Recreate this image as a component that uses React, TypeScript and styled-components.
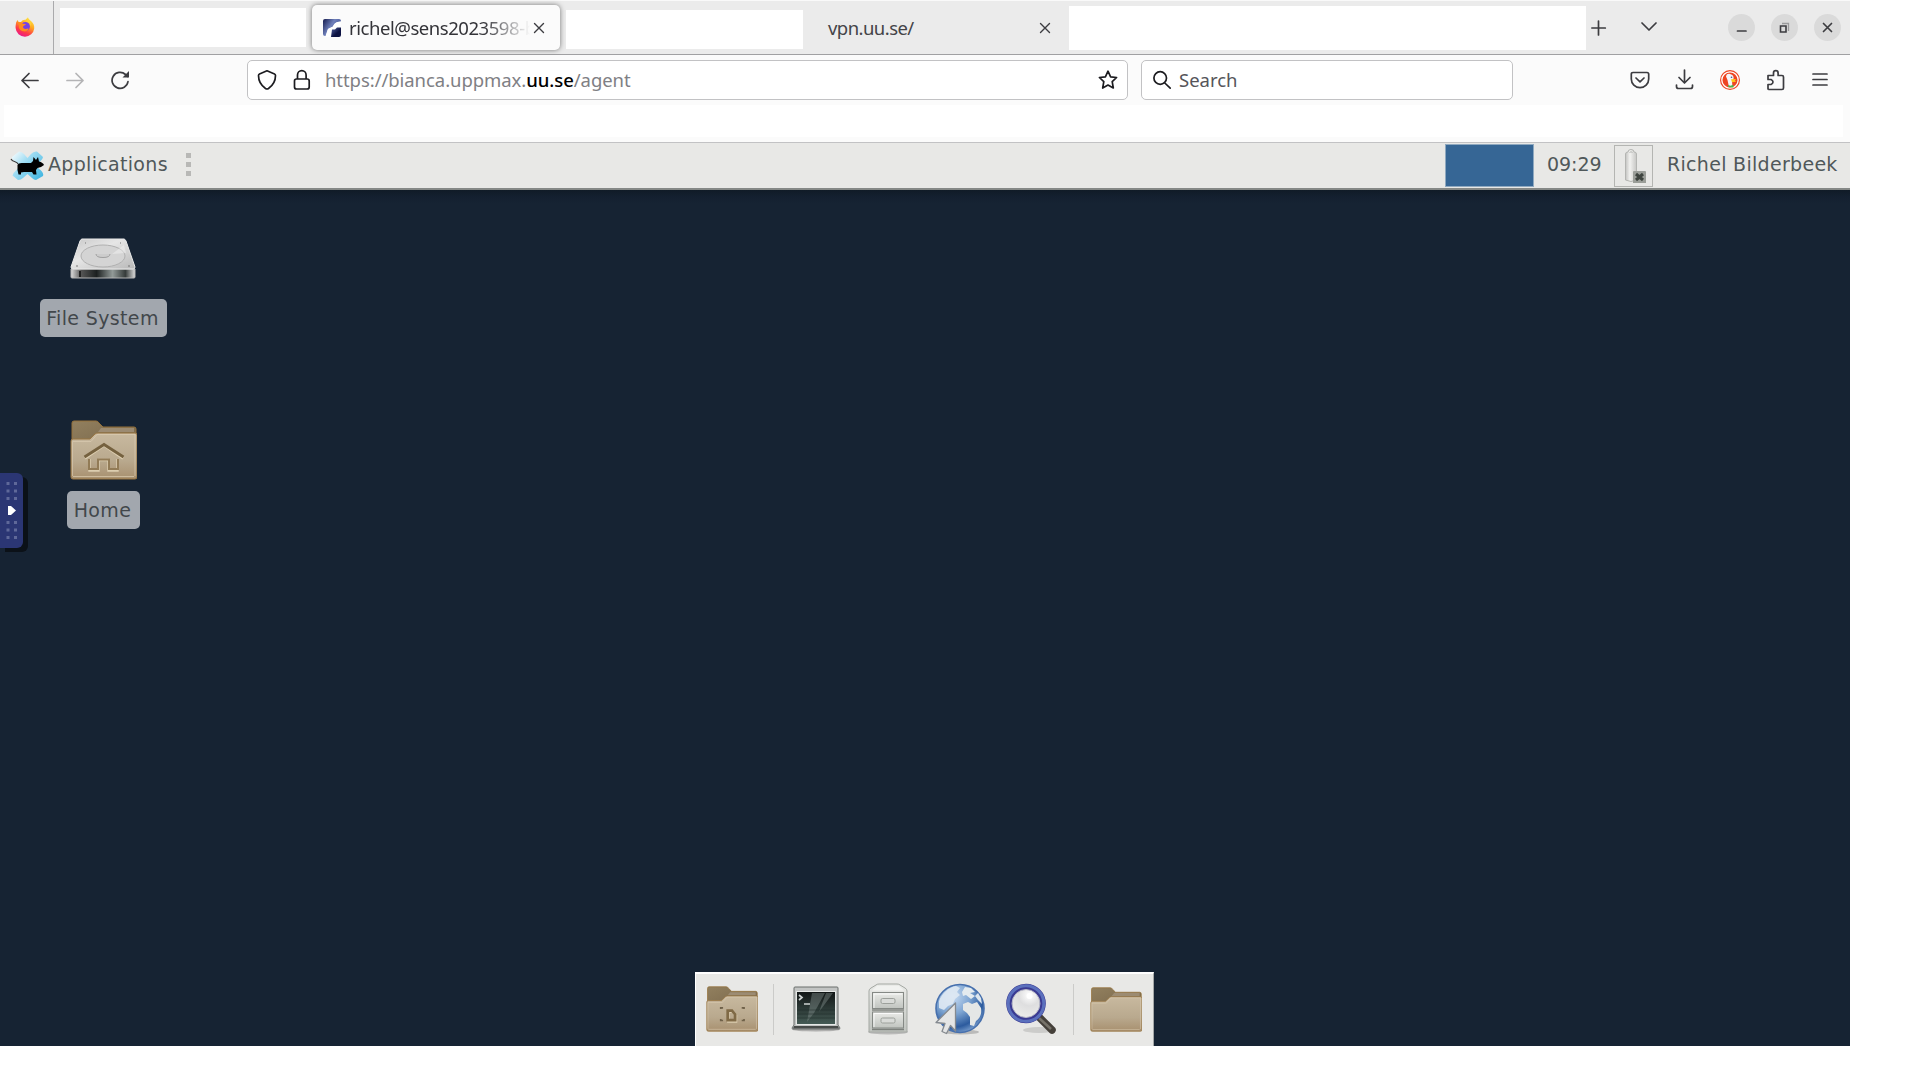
import React from "react";
import styled, { createGlobalStyle } from "styled-components";

const GlobalStyle = createGlobalStyle`
  * { box-sizing: border-box; }
  body { margin: 0; background: #fff; }
`;

const ui = `"Noto Sans", "Open Sans", sans-serif`;
const desk = `"DejaVu Sans", sans-serif`;

const Window = styled.div`
  width: 1850px;
  height: 1046px;
  display: flex;
  flex-direction: column;
  overflow: hidden;
`;
const TabBar = styled.div`
  height: 55px;
  flex: none;
  display: flex;
  align-items: flex-start;
  background: #ebebeb;
  border-top: 1px solid #f9f9f9;
  border-bottom: 1px solid #a0a0a2;
`;
const PinnedTab = styled.div`
  width: 54px;
  height: 53px;
  padding: 16px 0 0 15px;
  border-right: 1px solid #aaaaac;
`;
const Blank = styled.div<{ w: number; h: number; top: number; left: number }>`
  width: ${(p) => p.w}px;
  height: ${(p) => p.h}px;
  margin: ${(p) => p.top}px 0 0 ${(p) => p.left}px;
  background: #fff;
  flex: none;
`;
const ActiveTab = styled.div`
  width: 248px;
  height: 45px;
  margin: 4px 0 0 6px;
  padding: 0 14px 0 11px;
  flex: none;
  display: flex;
  align-items: center;
  border-radius: 5px;
  background: #fbfbfb;
  box-shadow: 0 0 5px rgba(0, 0, 0, 0.5);
`;
const TabTitle = styled.span`
  margin-left: 8px;
  width: 185px;
  margin-right: -1px;
  flex: none;
  white-space: nowrap;
  font: 18.5px/28px ${ui};
  letter-spacing: -0.45px;
  color: #333338;
  -webkit-mask-image: linear-gradient(90deg, #000 72%, transparent 98%);
  mask-image: linear-gradient(90deg, #000 72%, transparent 98%);
`;
const PlainTab = styled.div`
  width: 266px;
  height: 53px;
  flex: none;
  display: flex;
  align-items: center;
  justify-content: space-between;
  padding: 0 18px 0 25px;
  font: 18.5px/28px ${ui};
  letter-spacing: -0.55px;
  color: #444448;
`;
const TabActions = styled.div`
  height: 53px;
  flex: 1;
  display: flex;
  align-items: center;
  padding: 0 9px 0 5px;
`;
const Gap = styled.div<{ w?: number }>`
  ${(p) => (p.w ? `width: ${p.w}px; flex: none;` : `flex: 1;`)}
`;
const WindowButton = styled.div`
  width: 27px;
  height: 27px;
  border-radius: 50%;
  background: #dadada;
  margin-left: 16px;
  display: flex;
  flex: none;
`;
const NavBar = styled.div`
  height: 50px;
  flex: none;
  display: flex;
  align-items: center;
  padding: 0 20px;
  background: #fbfbfb;
`;
const Field = styled.div<{ w: number }>`
  width: ${(p) => p.w}px;
  height: 40px;
  flex: none;
  display: flex;
  align-items: center;
  padding: 0 9px;
  background: #fff;
  border: 1px solid #c2c2c4;
  border-radius: 5px;
  font: 18.5px/28px ${ui};
  color: #55555a;
`;
const Url = styled.span`
  margin-left: 14px;
  flex: 1;
  color: #808084;
  letter-spacing: -0.06px;
  b { font-weight: 500; color: #000; }
`;
const Bookmarks = styled.div`
  height: 37px;
  flex: none;
  padding: 0 7px 0 4px;
  background: #fbfbfb;
`;
const BookmarkArea = styled.div`
  height: 32px;
  background: #fff;
`;
const Panel = styled.div`
  height: 48px;
  flex: none;
  display: flex;
  align-items: center;
  padding-left: 10px;
  background: #e8e8e6;
  border-top: 1px solid #c2c2c4;
  border-bottom: 2px solid #858886;
  font: 19px/24px ${desk};
  color: #50585a;
`;
const PanelText = styled.span<{ w: number; left: number; sp: number }>`
  width: ${(p) => p.w}px;
  margin-left: ${(p) => p.left}px;
  padding-bottom: 3px;
  letter-spacing: ${(p) => p.sp}px;
  white-space: nowrap;
`;
const Handle = styled.div`
  display: grid;
  gap: 4px;
  margin: 0 0 2px 18px;
  i { width: 5px; height: 5px; background: #b8b8b6; }
`;
const Pager = styled.div`
  width: 89px;
  height: 43px;
  background: #366695;
  border: 1px solid #8fa9c0;
`;
const Tray = styled.div`
  width: 39px;
  height: 42px;
  margin-left: 13px;
  border: 1px solid #b4b5b2;
  flex: none;
`;
const Desktop = styled.div`
  flex: 1;
  position: relative;
  background: linear-gradient(#101b27, #142030 7px, #162333 14px);
`;
const DesktopItem = styled.div<{ x: number; y: number }>`
  position: absolute;
  left: ${(p) => p.x}px;
  top: ${(p) => p.y}px;
  display: flex;
  flex-direction: column;
  align-items: center;
`;
const ItemLabel = styled.div<{ w: number; top: number }>`
  width: ${(p) => p.w}px;
  height: 38px;
  margin-top: ${(p) => p.top}px;
  padding-right: 2px;
  border-radius: 5px;
  background: #a2a7ae;
  text-align: center;
  font: 19px/38px ${desk};
  letter-spacing: 0.35px;
  color: #42474b;
  white-space: nowrap;
`;
const SideHandle = styled.div`
  position: absolute;
  left: 0;
  top: 283px;
  width: 23px;
  height: 75px;
  border-radius: 0 6px 6px 0;
  background: #2b3674;
  box-shadow: 5px 4px 0 #0b1118;
`;
const Dock = styled.div`
  position: absolute;
  left: 695px;
  bottom: 0;
  width: 459px;
  height: 74px;
  display: flex;
  align-items: center;
  background: #e8e8e6;
  border: solid #fff;
  border-width: 2px 1px 0 1px;
  border-right-color: #a5a8a8;
  padding: 0 11px 2px 10px;
  svg { flex: none; }
`;
const Divider = styled.div`
  width: 1px;
  height: 51px;
  background: #cbcbc9;
`;

const Line = ({ w, h, d, color = "#3c3c40", sw = 1.7 }: { w: number; h: number; d: string; color?: string; sw?: number }) => (
  <svg width={w} height={h} viewBox={`0 0 ${w} ${h}`} fill="none" stroke={color} strokeWidth={sw} strokeLinecap="round" strokeLinejoin="round" style={{ flex: "none" }}>
    <path d={d} />
  </svg>
);

const Firefox = () => (
  <svg width="20" height="20" viewBox="0 0 20 20">
    <defs>
      <linearGradient id="fx" x1=".8" y1="0" x2=".3" y2="1">
        <stop offset="0" stopColor="#fff04a" /><stop offset=".4" stopColor="#ffa51f" /><stop offset=".72" stopColor="#ff3c47" /><stop offset="1" stopColor="#e8158f" />
      </linearGradient>
    </defs>
    <path d="M1.2 5.2 2.6 3l1 2 2.4.2C7 3 9 2.500 10.500 2.700L13 .3c.3 2 2 2.700 3.500 4.200 2 1.800 3 4 2.700 7A9.200 9.200 0 0 1 10 19.700 9.300 9.300 0 0 1 .6 11C.5 8.500.9 7 1.200 5.200Z" fill="url(#fx)" />
    <circle cx="10.300" cy="9.500" r="4.600" fill="#7542e5" />
    <path d="M2.600 5.500c2.500-.8 4.500 0 5.300 1.200l3 .3c-.3 1.200-2 1.500-2.600 2.300-.8 1 .2 2.500 1.800 2.700 1.600.2 2.300-.8 3.500-.3-.7 2-3 3-5.400 2.600-3-.5-4.700-3-4.200-5.800Z" fill="#ff8a1e" />
    <path d="M11 4.500c2.500.2 4.500 2 4.500 5 1-2.500.3-5.500-2-7.200Z" fill="#ffd23a" />
  </svg>
);
const ThinLinc = () => (
  <svg width="18" height="18" viewBox="0 0 18 18" style={{ flex: "none" }}>
    <defs>
      <linearGradient id="tl" x1="0" y1="0" x2="1" y2=".6"><stop offset="0" stopColor="#141a4c" /><stop offset=".5" stopColor="#6f80bb" /><stop offset="1" stopColor="#3a4a8c" /></linearGradient>
      <linearGradient id="tl2" x1="0" y1="0" x2="1" y2="1"><stop offset="0" stopColor="#5363a2" /><stop offset=".6" stopColor="#0c1242" /></linearGradient>
    </defs>
    <path d="M2 0h14q2 0 2 2v.5L14.500 3Q11 4 10 7.500L5 10 2.500 17H2q-2 0-2-2V2Q0 0 2 0Z" fill="url(#tl)" />
    <path d="M18 2.500 14.500 3Q11 4 10 7.500L5 10 2.500 18H7l2-6 3-2 5-2 1-2Z" fill="#fff" />
    <path d="M9 10.500h3l2-2h4V16q0 2-2 2H8Z" fill="url(#tl2)" />
  </svg>
);
const Duck = () => (
  <svg width="20" height="20" viewBox="0 0 20 20">
    <circle cx="10" cy="10" r="10" fill="#ee4522" />
    <circle cx="10" cy="10" r="8.200" fill="none" stroke="#fff" strokeWidth="1.300" />
    <path d="M6 6.500C6.500 4 8 3.600 10 4c3 .5 4 2.500 3.500 5l-1.500 2.500L12.500 17H9L7.500 10Z" fill="#f5f5fa" />
    <path d="M11 9.300 16 9l-1 1.500 1 1.200-4 .5Z" fill="#ffc61c" />
    <path d="m8 15 2.500.8 2.800-1 .2 2.700-5-.3Z" fill="#48b748" />
    <circle cx="11.500" cy="7.300" r=".8" fill="#3a5b88" />
  </svg>
);
const Mouse = () => (
  <svg width="34" height="30" viewBox="0 0 34 30">
    <defs><linearGradient id="xm" x1="0" y1="0" x2="1" y2=".8"><stop offset="0" stopColor="#fff" /><stop offset=".4" stopColor="#a4def3" /><stop offset="1" stopColor="#46b8e2" /></linearGradient></defs>
    <path d="M2 6 9 .5q3 0 5 2.500l3.500 4L21 3q2.500-3 6-2.500l6 5.500q0 2-3 4.500L26 15l5 4.500q3 3 2 5.500l-7 4q-2 0-4-2l-4.500-4-4.500 4q-2 2-5 2l-5.500-4.500q0-2 3-4.500L10 15l-5-4.500Q1.500 8 2 6Z" fill="url(#xm)" />
    <path d="M1 8q1 2 3.500 2.500T9 14" fill="none" stroke="#333" strokeWidth="1.200" />
    <path d="M7.500 14q1-2 4-2h9.500l2-2 .5-4 2.500 3 2-3 1 4.500q4 1 5 3.500l-3 2-3.500 1-1.500 2 .5 4.500h-3L22 21h-8l-3 .5v2H8.500L7.500 19Z" fill="#000" />
  </svg>
);
const Battery = () => (
  <svg width="37" height="40" viewBox="0 0 37 40">
    <defs><linearGradient id="bt"><stop offset="0" stopColor="#c2c2c0" /><stop offset=".4" stopColor="#f2f2f0" /><stop offset="1" stopColor="#c6c6c4" /></linearGradient></defs>
    <path d="M10.500 34V8q0-2 2.500-2 0-2.500 3-2.500T19 6q2.500 0 2.500 2v26q-5.500 3-11 0Z" fill="url(#bt)" stroke="#b4b5b2" />
    <path d="M14.500 6.500q1.500-1.500 3 0" fill="none" stroke="#b4b5b2" />
    <path d="M18 37V26q0-1 1-1h11q1 0 1 1v11Z" fill="#9b9e99" />
    <path d="m21 28 7 6m0-6-7 6" stroke="#3e443f" strokeWidth="3" />
  </svg>
);
const Drive = () => (
  <svg width="66" height="42" viewBox="0 0 66 42" style={{ marginRight: 2 }}>
    <defs>
      <linearGradient id="dt" x2="1" y2="1"><stop stopColor="#c8c8c8" /><stop offset=".4" stopColor="#e6e6e6" /><stop offset="1" stopColor="#b8b8b8" /></linearGradient>
      <linearGradient id="df"><stop stopColor="#ddd" /><stop offset=".16" stopColor="#555" /><stop offset=".4" stopColor="#1c2020" /><stop offset=".65" stopColor="#929a98" /><stop offset=".85" stopColor="#353b3a" /><stop offset="1" stopColor="#ddd" /></linearGradient>
    </defs>
    <path d="M1 31h64v8q0 1-1 1H2q-1 0-1-1Z" fill="url(#df)" stroke="#b4b4b4" />
    <path d="M12 1h42q1 0 2 2l9 26q0 2-2 2H3q-2 0-2-2l9-26q1-2 2-2Z" fill="url(#dt)" stroke="#eaeaea" />
    <ellipse cx="33" cy="18" rx="22" ry="11" fill="#d4d4d4" stroke="#b0b0b0" />
    <path d="M26 16q0 3.500 7 3.500t7-3.500" fill="#ccc" stroke="#9f9f9f" />
    <path d="m42 16 12-9 2 8Z" fill="#fff" opacity=".35" />
    <path d="M6 28h2m50 0h2M15 5h1m34 0h1" stroke="#777" />
    <path d="M10 33v6" stroke="#222" strokeWidth="2" />
  </svg>
);
const Folder = ({ w, h, kind }: { w: number; h: number; kind?: "home" | "desktop" }) => (
  <svg width={w} height={h} viewBox="0 0 67 60" preserveAspectRatio="none">
    <defs>
      <linearGradient id="ff" x2="0" y2="1"><stop stopColor="#c8b99f" /><stop offset=".6" stopColor="#b9a98e" /><stop offset="1" stopColor="#a8906f" /></linearGradient>
      <linearGradient id="fb" x2="1" y2="1"><stop stopColor="#92805f" /><stop offset="1" stopColor="#756347" /></linearGradient>
    </defs>
    <path d="M2 30V3q0-2 2-2h22q2 0 3 2l4 4h31q2 0 2 2v21Z" fill="url(#fb)" stroke="#94713a" />
    <path d="M31 8h33v4H28Z" fill="#a3927a" opacity=".8" />
    <path d="M1 21q0-2 2-2h17l5-5q1-1 3-1h37q2 0 2 2v42q0 2-2 2H3q-2 0-2-2Z" fill="url(#ff)" stroke="#997643" />
    <path d="M2.500 56V21.500H21l6-7h38V56" fill="none" stroke="#decfb5" opacity=".6" />
    <path d="M3 56.500h61" stroke="#ddceb1" opacity=".7" />
    {kind === "home" && (
      <g fill="none">
        <path d="m15 38.500 19-13 19 13M19.500 39v11.500h9V40h10v10.500h9V39" stroke="#dccdaf" strokeWidth="2.400" />
        <path d="m14.500 37 19.500-12.500 19.500 12.500" stroke="#75613f" strokeWidth="2.800" />
        <path d="M19 39v10h9V39.500h11V49h9V39" stroke="#927b56" strokeWidth="2" />
      </g>
    )}
    {kind === "desktop" && (
      <g fill="none" stroke="#806a46" strokeWidth="3.600">
        <path d="M28 32h5.500l4 5v7.500H28Z" stroke="#dccdaf" transform="translate(1 1.500)" />
        <path d="M28 32h5.500l4 5v7.500H28Z" />
        <path d="M19 30v-1.500h3m24 0h3V30M19 43v2h3m24 0h3v-2" stroke="#6f6149" strokeWidth="2.200" />
      </g>
    )}
  </svg>
);
const Terminal = () => (
  <svg width="50" height="46" viewBox="0 0 50 46">
    <defs><linearGradient id="tm" x2="0" y2="1"><stop stopColor="#111515" /><stop offset="1" stopColor="#455b55" /></linearGradient></defs>
    <ellipse cx="25" cy="43.500" rx="24" ry="2" fill="#777" opacity=".5" />
    <path d="M3 2q0-1 1-1h42q1 0 1 1v37l2 3q0 1-1 1H2q-1 0-1-1l2-3Z" fill="#c2c4c3" stroke="#6a6f6d" />
    <path d="M3 40h44l1 2.500H2Z" fill="#474b49" />
    <rect x="5.500" y="5.500" width="39" height="33" fill="url(#tm)" stroke="#e5e8e6" />
    <path d="M21 7h13L23 27 16 36Z" fill="#8c9895" opacity=".4" /><path d="M35 7h7L28 26Z" fill="#8c9895" opacity=".4" />
    <path d="M6 24h38M6 28h38M6 32h38" stroke="#1c2927" opacity=".5" />
    <path d="m8 9 3 2.500L8 14m5 4h6" fill="none" stroke="#ced3d2" strokeWidth="1.700" />
  </svg>
);
const Cabinet = () => (
  <svg width="42" height="52" viewBox="0 0 42 52">
    <defs><linearGradient id="cb" x2="0" y2="1"><stop stopColor="#eaebe8" /><stop offset="1" stopColor="#c0c4bf" /></linearGradient></defs>
    <ellipse cx="21" cy="49" rx="20" ry="2.500" fill="#777" opacity=".4" />
    <path d="M2 8q0-2 2-3l5-3q1-1 3-1h18q2 0 3 1l5 3q2 1 2 3v41H2Z" fill="url(#cb)" stroke="#a4a8a3" />
    <path d="M5 7.500 10 3h22l5 4.500Z" fill="#f1f2f0" />
    <g fill="url(#cb)" stroke="#858985"><rect x="5.500" y="9.500" width="31" height="16" /><rect x="5.500" y="29" width="31" height="16" /></g>
    <path d="M5 27h32M5 46.500h32" stroke="#60645f" strokeWidth="1.500" opacity=".7" />
    <g fill="#d9dbd8" stroke="#9ca09b"><rect x="14" y="15.500" width="14" height="5" rx="1.500" /><rect x="14" y="35" width="14" height="5" rx="1.500" /></g>
    <g stroke="#fff" fill="none" opacity=".8"><path d="M7 25V11h28M7 44V30.500h28" /></g>
  </svg>
);
const Globe = () => (
  <svg width="52" height="52" viewBox="0 0 52 52">
    <defs><radialGradient id="gl" cx=".35" cy=".25" r=".8"><stop stopColor="#c8dcf2" /><stop offset=".45" stopColor="#7ea5d2" /><stop offset=".8" stopColor="#2c5b9e" /><stop offset="1" stopColor="#7ca1d0" /></radialGradient></defs>
    <ellipse cx="27" cy="49" rx="18" ry="2.500" fill="#777" opacity=".4" />
    <circle cx="26" cy="25.500" r="24" fill="url(#gl)" stroke="#4770ad" strokeWidth="1.600" />
    <path d="M5 18C8 10 15 4 22 3l4 2-3 4 3 3-5 4-2 5-5 2-4 4-5-2Z" fill="#dfe9f3" opacity=".9" />
    <path d="m31 4 6 1 4 4-5 1 5 3-4 3-5-4-3 1-1-4Z" fill="#e4ebef" />
    <path d="m29 21 5-2 4 2 5-2 4 6c1 6-1 10-5 13l-2 5-4-1v-8l-3-4-4-3Z" fill="#e4e7e6" />
    <path d="m44 10 3 5 1 6-4-4-3-4Z" fill="#dce6ee" />
    <path d="M21.500 20v28l-5-5.500-4 8-4.500-2 3-8-9-1Z" fill="#e4e5e5" stroke="#858a90" strokeWidth="1.300" strokeLinejoin="round" />
  </svg>
);
const Magnifier = () => (
  <svg width="53" height="52" viewBox="0 0 53 52">
    <defs><radialGradient id="mg" cx=".6" cy=".25" r=".8"><stop stopColor="#fff" /><stop offset=".4" stopColor="#dededf" /><stop offset="1" stopColor="#f0f0ee" /></radialGradient></defs>
    <ellipse cx="34" cy="47" rx="16" ry="3" fill="#777" opacity=".25" />
    <path d="m34 34 13 13" stroke="#45403a" strokeWidth="7.500" strokeLinecap="round" />
    <path d="m34 35 12 11" stroke="#77736a" strokeWidth="2.500" />
    <circle cx="21" cy="20.500" r="16.800" fill="url(#mg)" stroke="#3a3a92" strokeWidth="6" />
    <circle cx="21" cy="20.500" r="17.800" fill="none" stroke="#5b70bd" strokeWidth="3" />
    <circle cx="21" cy="20.500" r="14" fill="none" stroke="#b9bac8" strokeWidth="1" />
    <circle cx="24.500" cy="13" r="3" fill="#fff" />
  </svg>
);

const dotRows = [10, 17.500, 25, 49, 56.500, 64];

export default function App() {
  return (
    <>
      <GlobalStyle />
      <Window>
        <TabBar>
          <PinnedTab><Firefox /></PinnedTab>
          <Blank w={246} h={39} top={7} left={6} />
          <ActiveTab>
            <ThinLinc />
            <TabTitle>richel@sens2023598-b</TabTitle>
            <Line w={12} h={12} d="m1.500 1.500 9 9m0-9-9 9" sw={1.400} />
          </ActiveTab>
          <Blank w={237} h={39} top={9} left={6} />
          <PlainTab>
            vpn.uu.se/
            <Line w={12} h={12} d="m1.500 1.500 9 9m0-9-9 9" sw={1.400} />
          </PlainTab>
          <Blank w={517} h={44} top={5} left={0} />
          <TabActions>
            <Line w={16} h={16} d="M7.500 1v14M.800 8h13.500" />
            <Gap w={33} />
            <Line w={18} h={12} d="m2 1 7 7 7-7" />
            <Gap />
            <WindowButton><Line w={27} h={27} d="M9.500 17h8.500" /></WindowButton>
            <WindowButton>
              <svg width="27" height="27" fill="none" strokeWidth="1.600">
                <path d="M11 9.500h6.500V17" stroke="#9b9b9d" strokeWidth="1.300" />
                <path d="M9.500 12H15v6H9.500Z" stroke="#3c3c40" />
              </svg>
            </WindowButton>
            <WindowButton><Line w={27} h={27} d="m9.500 9.500 8 8m0-8-8 8" /></WindowButton>
          </TabActions>
        </TabBar>
        <NavBar>
          <Line w={20} h={20} d="M18 10.500H2m7-7-7 7 7 7" />
          <Gap w={25} />
          <Line w={20} h={20} d="M2 10.500h16m-7-7 7 7-7 7" color="#b4b4b6" />
          <Gap w={25} />
          <svg width="20" height="20" fill="none" stroke="#3c3c40" strokeWidth="1.700">
            <path d="M18 11.500A8 8 0 1 1 15.500 4.500l2 2" strokeLinecap="round" />
            <path d="M12.500 7.500H19V1Z" fill="#3c3c40" stroke="none" />
          </svg>
          <Gap w={117} />
          <Field w={881}>
            <Line w={20} h={22} d="M10 1.800 17.500 5q1 .5 1 1.500c0 6-2 9.500-7 13q-1.500 1-3 0c-5-3.500-7-7-7-13q0-1 1-1.500Z" color="#1c1c20" />
            <Gap w={16} />
            <Line w={18} h={22} d="M4.500 10V6a4.300 4.300 0 0 1 8.600 0v4M3.500 10h10.700q2 0 2 2v6q0 2-2 2H3.500q-2 0-2-2v-6q0-2 2-2Z" color="#1c1c20" />
            <Url>https://bianca.uppmax.<b>uu.se</b>/agent</Url>
            <Line w={20} h={22} d="m10 2.200 2.600 5.600 6 .7-4.400 4.200 1.100 6.300-5.300-3-5.300 3 1.100-6.300L1.400 8.500l6-.7Z" color="#1c1c20" />
          </Field>
          <Gap w={13} />
          <Field w={372}>
            <Gap w={1} />
            <Line w={20} h={20} d="M14.500 8a6.300 6.300 0 1 1-12.600 0 6.300 6.300 0 0 1 12.600 0Zm-1.700 5 5.400 5.200" color="#1c1c20" />
            <Gap w={7} />
            Search
          </Field>
          <Gap w={117} />
          <Line w={20} h={20} d="M3 2.500h14q1.700 0 1.700 1.700V9a8.700 8.700 0 0 1-17.400 0V4.200q0-1.700 1.700-1.700ZM6 8l4 3.800L14 8" />
          <Gap w={25} />
          <Line w={19} h={22} d="M9.500 1v12.500M4 8.500l5.500 5.500L15 8.500M1.500 16v1.500q0 2 2 2h12q2 0 2-2V16" />
          <Gap w={26} />
          <Duck />
          <Gap w={26} />
          <Line w={20} h={22} d="M2 20V15.500h3q2-1 2-2.500t-2-2.500H2V6.500h5.500V4a2.300 2.300 0 0 1 4.600 0v2.500H16q1.500 0 1.500 1.500v11q0 1.500-1.500 1.500H3" />
          <Gap w={25} />
          <Line w={18} h={18} d="M2 3h14M2 8.500h14M2 14h14" />
        </NavBar>
        <Bookmarks><BookmarkArea /></Bookmarks>
        <Panel>
          <Mouse />
          <PanelText w={120} left={4} sp={0.32}>Applications</PanelText>
          <Handle><i /><i /><i /></Handle>
          <Gap />
          <Pager />
          <PanelText w={54} left={13} sp={-0.05}>09:29</PanelText>
          <Tray><Battery /></Tray>
          <PanelText w={183} left={14} sp={0.3}>Richel Bilderbeek</PanelText>
        </Panel>
        <Desktop>
          <DesktopItem x={40} y={48}>
            <Drive />
            <ItemLabel w={127} top={19}>File System</ItemLabel>
          </DesktopItem>
          <DesktopItem x={67} y={230}>
            <Folder w={67} h={60} kind="home" />
            <ItemLabel w={73} top={11}>Home</ItemLabel>
          </DesktopItem>
          <SideHandle>
            <svg width="23" height="75">
              {dotRows.map((y) => (
                <g key={y} fill="#5f6899"><rect x="6.500" y={y - 1} width="3" height="3" /><rect x="14" y={y - 1} width="3" height="3" /></g>
              ))}
              <path d="M8 33h3l5 4.500-5 4.500H8Z" fill="#fff" />
            </svg>
          </SideHandle>
          <Dock>
            <Folder w={52} h={46} kind="desktop" />
            <Gap w={15} /><Divider /><Gap w={17} />
            <Terminal />
            <Gap w={26} />
            <Cabinet />
            <Gap w={25} />
            <Globe />
            <Gap w={19} />
            <Magnifier />
            <Gap w={15} /><Divider /><Gap w={17} />
            <Folder w={52} h={45} />
          </Dock>
        </Desktop>
      </Window>
    </>
  );
}
